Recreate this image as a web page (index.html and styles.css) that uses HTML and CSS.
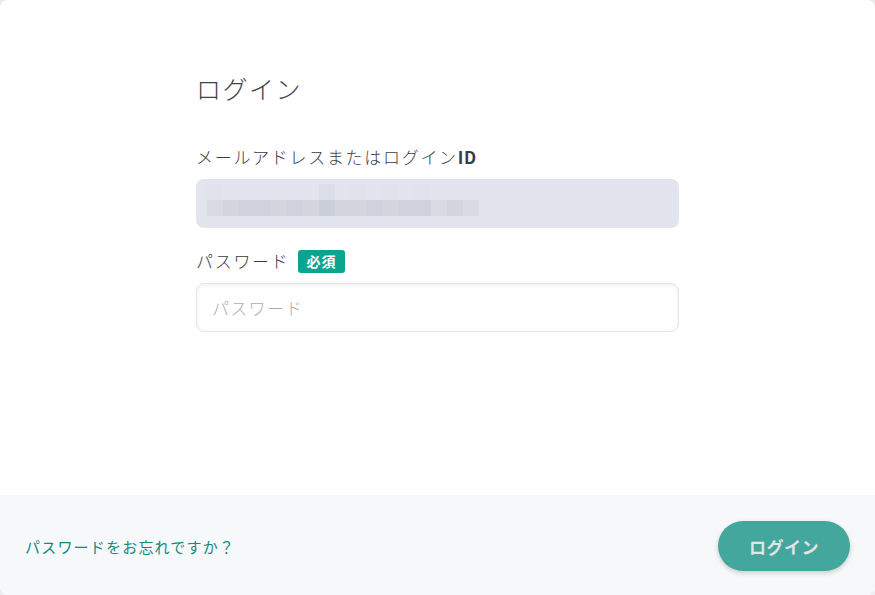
FILE: index.html
```html
<!DOCTYPE html>
<html lang="ja">
<head>
<meta charset="utf-8">
<link rel="stylesheet" href="styles.css">
</head>
<body>
<div class="card">
  <main class="content">
    <div class="form">
      <h1 class="title">ログイン</h1>
      <div class="field">
        <label class="label">メールアドレスまたはログイン<b>ID</b></label>
        <div class="input filled">
          <div class="blur">
            <div class="blur-top">
              <span class="px s1"></span><span class="px s0"></span><span class="px s0"></span><span class="px s0"></span><span class="px s0"></span><span class="px s0"></span><span class="px s0"></span><span class="px s2"></span><span class="px s0"></span><span class="px s1"></span><span class="px s0"></span><span class="px s1"></span><span class="px s0"></span><span class="px s1"></span>
            </div>
            <div class="blur-row">
              <span class="px a"></span><span class="px b"></span><span class="px c"></span><span class="px c"></span><span class="px b"></span><span class="px c"></span><span class="px b"></span><span class="px d"></span><span class="px b"></span><span class="px b"></span><span class="px c"></span><span class="px b"></span><span class="px c"></span><span class="px c"></span><span class="px a"></span><span class="px b"></span><span class="px a"></span>
            </div>
          </div>
        </div>
      </div>
      <div class="field">
        <label class="label">パスワード<span class="badge">必須</span></label>
        <input class="input pw" type="password" placeholder="パスワード">
      </div>
    </div>
  </main>
  <footer class="footer">
    <a class="forgot" href="#">パスワードをお忘れですか？</a>
    <button class="login-btn" type="button">ログイン</button>
  </footer>
</div>
</body>
</html>
```

FILE: styles.css
```css
* { box-sizing: border-box; }
html, body { height: 100%; }
body {
  margin: 0;
  background: #ececef;
  font-family: "Noto Sans CJK JP", "Noto Sans", sans-serif;
  color: #3f4049;
}
.card {
  height: 595px;
  background: #ffffff;
  border-radius: 8px;
  overflow: hidden;
  display: flex;
  flex-direction: column;
}
.content {
  flex: 1;
  display: flex;
  justify-content: center;
  padding-top: 68px;
}
.form {
  width: 483px;
  display: flex;
  flex-direction: column;
}
.title {
  margin: 0 0 36px;
  font-size: 25px;
  font-weight: 300;
  letter-spacing: 1.5px;
  line-height: 40px;
  color: #3f4049;
}
.field {
  display: flex;
  flex-direction: column;
  margin-bottom: 20px;
}
.label {
  font-size: 17px;
  font-weight: 300;
  letter-spacing: 1.7px;
  line-height: 26px;
  color: #3a3b44;
  display: flex;
  align-items: center;
  margin-bottom: 9px;
}
.label b { font-weight: 700; letter-spacing: 0.5px; }
.badge {
  margin-left: 8px;
  background: #0aa491;
  color: #fff;
  font-size: 14px;
  font-weight: 700;
  letter-spacing: 1px;
  line-height: 23px;
  padding: 0 8px 0 9px;
  border-radius: 3px;
}
.input {
  width: 100%;
  height: 49px;
  border-radius: 8px;
  font-family: inherit;
}
.filled {
  background: #e2e5ee;
  padding: 5px 0 0 11px;
}
.blur { display: flex; flex-direction: column; }
.blur-top, .blur-row { display: flex; }
.px { display: block; width: 16px; height: 16px; }
.s0 { background: #e2e5ee; }
.s1 { background: #e0e3ec; }
.s2 { background: #dcdfe8; }
.a { background: #d8dbe3; }
.b { background: #d3d6df; }
.c { background: #cfd2dc; }
.d { background: #cbcfd9; }
.pw {
  border: 1px solid #e3e5eb;
  background: #fff;
  box-shadow: inset 0 1px 4px rgba(0,0,0,0.07);
  padding: 0 15px;
  font-size: 17px;
  font-weight: 300;
  letter-spacing: 1.3px;
  color: #45464f;
  outline: none;
}
.pw::placeholder { color: #a9acbb; }
.footer {
  height: 100px;
  background: #f7f8fa;
  display: flex;
  align-items: center;
  justify-content: space-between;
  padding: 0 25px 0 25px;
}
.forgot {
  color: #16897d;
  text-decoration: none;
  font-size: 15px;
  letter-spacing: 1.2px;
  margin-top: 2px;
}
.login-btn {
  width: 132px;
  height: 50px;
  border: none;
  border-radius: 25px;
  background: #43a79d;
  color: #e3e3e3;
  font-family: inherit;
  font-size: 17px;
  font-weight: 700;
  letter-spacing: 0.5px;
  box-shadow: 0 2px 5px rgba(0,0,0,0.18);
  margin-top: 2px;
}
```
